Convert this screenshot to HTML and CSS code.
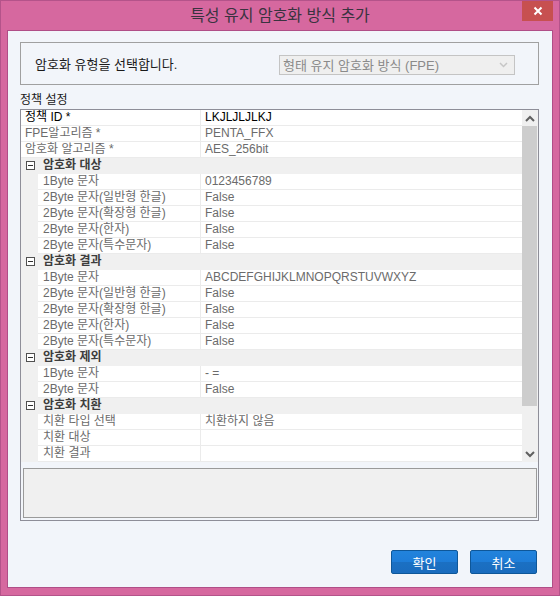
FILE: index.html
```html
<!DOCTYPE html>
<html lang="ko">
<head>
<meta charset="utf-8">
<link rel="stylesheet" href="styles.css">
</head>
<body>
<div class="window">
  <div class="titlebar">
    <div></div>
    <div class="title">특성 유지 암호화 방식 추가</div>
    <div class="close"><svg width="10" height="10" viewBox="0 0 10 10"><path d="M1.5 1.5 L8.5 8.5 M8.5 1.5 L1.5 8.5" stroke="#fff" stroke-width="2" fill="none"/></svg></div>
  </div>
  <div class="client">
    <div class="group">
      <span class="glabel">암호화 유형을 선택합니다.</span>
      <div class="combo">
        <span>형태 유지 암호화 방식 (FPE)</span>
        <svg width="9" height="6" viewBox="0 0 9 6"><polyline points="1,1 4.5,4.5 8,1" stroke="#c6c6c6" stroke-width="1.5" fill="none"/></svg>
      </div>
    </div>
    <div class="seclabel">정책 설정</div>
    <div class="grid">
      <div class="list">
        <div class="rows">
          <div class="row"><div class="name dark">정책 ID *</div><div class="val dark">LKJLJLJLKJ</div></div>
          <div class="row"><div class="name">FPE알고리즘 *</div><div class="val">PENTA_FFX</div></div>
          <div class="row"><div class="name">암호화 알고리즘 *</div><div class="val">AES_256bit</div></div>
          <div class="row cat"><span class="tog"></span><span>암호화 대상</span></div>
          <div class="row child"><div class="gut"></div><div class="name">1Byte 문자</div><div class="val">0123456789</div></div>
          <div class="row child"><div class="gut"></div><div class="name">2Byte 문자(일반형 한글)</div><div class="val">False</div></div>
          <div class="row child"><div class="gut"></div><div class="name">2Byte 문자(확장형 한글)</div><div class="val">False</div></div>
          <div class="row child"><div class="gut"></div><div class="name">2Byte 문자(한자)</div><div class="val">False</div></div>
          <div class="row child"><div class="gut"></div><div class="name">2Byte 문자(특수문자)</div><div class="val">False</div></div>
          <div class="row cat"><span class="tog"></span><span>암호화 결과</span></div>
          <div class="row child"><div class="gut"></div><div class="name">1Byte 문자</div><div class="val">ABCDEFGHIJKLMNOPQRSTUVWXYZ</div></div>
          <div class="row child"><div class="gut"></div><div class="name">2Byte 문자(일반형 한글)</div><div class="val">False</div></div>
          <div class="row child"><div class="gut"></div><div class="name">2Byte 문자(확장형 한글)</div><div class="val">False</div></div>
          <div class="row child"><div class="gut"></div><div class="name">2Byte 문자(한자)</div><div class="val">False</div></div>
          <div class="row child"><div class="gut"></div><div class="name">2Byte 문자(특수문자)</div><div class="val">False</div></div>
          <div class="row cat"><span class="tog"></span><span>암호화 제외</span></div>
          <div class="row child"><div class="gut"></div><div class="name">1Byte 문자</div><div class="val">- =</div></div>
          <div class="row child"><div class="gut"></div><div class="name">2Byte 문자</div><div class="val">False</div></div>
          <div class="row cat"><span class="tog"></span><span>암호화 치환</span></div>
          <div class="row child"><div class="gut"></div><div class="name">치환 타입 선택</div><div class="val">치환하지 않음</div></div>
          <div class="row child"><div class="gut"></div><div class="name">치환 대상</div><div class="val"></div></div>
          <div class="row child"><div class="gut"></div><div class="name">치환 결과</div><div class="val"></div></div>
        </div>
        <div class="scrollbar">
          <div class="sbtn"><svg width="16" height="16" viewBox="0 0 16 16"><polyline points="4,11 8,7 12,11" stroke="#606060" stroke-width="2" fill="none"/></svg></div>
          <div class="track"><div class="thumb"></div></div>
          <div class="sbtn"><svg width="16" height="16" viewBox="0 0 16 16"><polyline points="4,6 8,10 12,6" stroke="#606060" stroke-width="2" fill="none"/></svg></div>
        </div>
      </div>
      <div class="desc"></div>
    </div>
    <div class="buttons">
      <button class="btn">확인</button>
      <button class="btn">취소</button>
    </div>
  </div>
</div>
</body>
</html>
```
FILE: styles.css
```css
body {
  margin: 0;
  font-family: "Liberation Sans", "Noto Sans CJK KR", sans-serif;
}
.window {
  width: 560px;
  height: 596px;
  box-sizing: border-box;
  background: #d6689f;
  border: 1px solid #b4538a;
  display: flex;
  flex-direction: column;
}
.titlebar {
  height: 29px;
  display: grid;
  grid-template-columns: 1fr auto 1fr;
  align-items: start;
}
.title {
  font-size: 16px;
  line-height: 29px;
  color: #3a3340;
}
.close {
  justify-self: end;
  margin-right: 6px;
  width: 31px;
  height: 20px;
  background: #c75050;
  display: flex;
  align-items: center;
  justify-content: center;
}
.client {
  margin: 0 6px 7px 6px;
  height: 558px;
  box-sizing: border-box;
  border: 1px solid #b04e87;
  background: #f2f5fa;
  display: flex;
  flex-direction: column;
  font-size: 12px;
}
.group {
  margin: 11px 0 0 12px;
  width: 519px;
  height: 43px;
  box-sizing: border-box;
  border: 1px solid #a0a0a0;
  display: flex;
  align-items: center;
  padding-left: 14px;
}
.glabel {
  color: #1a1a1a;
  font-size: 13px;
}
.combo {
  margin-left: auto;
  margin-right: 23px;
  margin-top: 2px;
  width: 236px;
  height: 20px;
  box-sizing: border-box;
  border: 1px solid #c4c4c4;
  background: #efefef;
  color: #8a8a8a;
  display: flex;
  align-items: center;
  justify-content: space-between;
  padding: 0 6px 0 3px;
  font-size: 13px;
}
.seclabel {
  height: 24px;
  box-sizing: border-box;
  padding: 7px 0 0 12px;
  line-height: 17px;
  color: #1a1a1a;
}
.grid {
  margin-left: 12px;
  width: 519px;
  height: 412px;
  box-sizing: border-box;
  border: 1px solid #8e8e98;
  background: #f2f5fa;
  display: flex;
  flex-direction: column;
}
.list {
  display: flex;
  height: 352px;
  background: #fff;
}
.rows {
  width: 501px;
  display: flex;
  flex-direction: column;
}
.row {
  display: flex;
  height: 16px;
  line-height: 15px;
  white-space: nowrap;
}
.name, .val, .cat {
  box-sizing: border-box;
  height: 16px;
  border-bottom: 1px solid #ebebeb;
  color: #6b6b6b;
}
.name {
  width: 180px;
  padding-left: 4px;
  border-right: 1px solid #ebebeb;
  overflow: hidden;
}
.val {
  flex: 1;
  padding-left: 4px;
}
.dark {
  color: #000;
}
.child .gut {
  width: 17px;
  height: 16px;
  background: #f0f0f0;
}
.child .name {
  width: 163px;
  padding-left: 5px;
}
.cat {
  width: 100%;
  background: #f0f0f0;
  border-bottom-color: #f0f0f0;
  display: flex;
  align-items: center;
  font-weight: bold;
  color: #3d3d3d;
}
.tog {
  width: 9px;
  height: 9px;
  box-sizing: border-box;
  border: 1px solid #505050;
  margin: 0 8px 0 5px;
  display: flex;
  align-items: center;
  justify-content: center;
  background: #fff;
}
.tog::after {
  content: "";
  width: 5px;
  height: 1px;
  background: #303030;
}
.scrollbar {
  width: 16px;
  background: #f0f0f0;
  display: flex;
  flex-direction: column;
}
.sbtn {
  height: 16px;
}
.sbtn svg {
  display: block;
}
.track {
  flex: 1;
}
.thumb {
  margin: 0 1px 0 0;
  height: 280px;
  background: #cdcdcd;
}
.desc {
  margin: 6px 1px 2px 2px;
  height: 50px;
  box-sizing: border-box;
  border: 1px solid #9a9a9a;
  background: #f0f0f0;
}
.buttons {
  margin-top: 29px;
  padding-right: 15px;
  display: flex;
  justify-content: flex-end;
  gap: 12px;
}
.btn {
  width: 67px;
  height: 24px;
  box-sizing: border-box;
  border: 1px solid #0e5799;
  border-radius: 2px;
  background: linear-gradient(#2283dc 0%, #1e7dd8 50%, #1b70c3 50%, #1a6cbe 100%);
  color: #fff;
  font-family: "Liberation Sans", "Noto Sans CJK KR", sans-serif;
  font-size: 13px;
  padding: 0;
}
```
